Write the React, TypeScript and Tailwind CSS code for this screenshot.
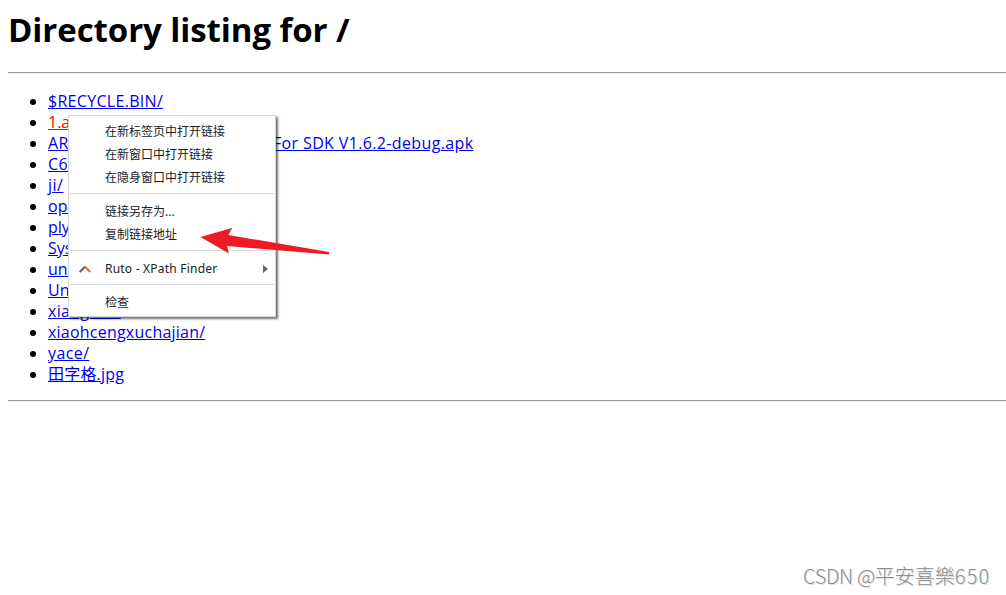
interface Entry {
  name: string;
  rest?: string;
  visited?: boolean;
  className?: string;
}

const entries: Entry[] = [
  { name: "$RECYCLE.BIN/", className: "tracking-[0.3px]" },
  { name: "1.apk", visited: true },
  { name: "AR", rest: "For SDK V1.6.2-debug.apk", className: "tracking-[0.36px]" },
  { name: "C6/", className: "tracking-[0.3px]" },
  { name: "ji/", className: "tracking-[0.5px]" },
  { name: "op/" },
  { name: "ply/" },
  { name: "Sys/" },
  { name: "un/" },
  { name: "Un/" },
  { name: "xiangmu/", className: "tracking-[0.3px]" },
  { name: "xiaohcengxuchajian/", className: "tracking-[0.22px]" },
  { name: "yace/", className: "tracking-[0.4px]" },
  { name: "田字格.jpg", className: "tracking-[0.2px]" },
];

const MenuItem = ({ label }: { label: string }) => (
  <div className="h-[23px] pl-9 leading-[23px] whitespace-nowrap">{label}</div>
);

const Separator = () => <div className="mx-px mt-1 mb-1.5 h-px bg-[#d9dadc]" />;

const ContextMenu = () => (
  <div className="absolute left-[68px] top-[115px] h-[202px] w-[208px] border border-[#d5d6d8] bg-white pt-1 text-xs text-[#202124] shadow-[2px_2px_2px_rgba(0,0,0,0.55)] font-['Noto_Sans','Noto_Sans_CJK_SC',sans-serif]">
    <MenuItem label="在新标签页中打开链接" />
    <MenuItem label="在新窗口中打开链接" />
    <MenuItem label="在隐身窗口中打开链接" />
    <Separator />
    <MenuItem label="链接另存为..." />
    <MenuItem label="复制链接地址" />
    <Separator />
    <div className="flex h-[23px] items-center pl-[10px] pr-[7px]">
      <svg className="h-2 w-3" viewBox="0 0 12 8" fill="none" strokeWidth="2">
        <path d="M0.7 7L6 1.7" stroke="#606060" />
        <path d="M5.5 1.2L11.3 7" stroke="#f06a30" />
      </svg>
      <span className="ml-[14px] flex-1 tracking-[0.22px] whitespace-nowrap">Ruto - XPath Finder</span>
      <svg className="h-2 w-[5px]" viewBox="0 0 5 8">
        <path d="M0 0L5 4L0 8Z" fill="#5f6368" />
      </svg>
    </div>
    <Separator />
    <MenuItem label="检查" />
  </div>
);

export default function App() {
  return (
    <div className="relative h-[595px] w-[1006px] overflow-hidden bg-white pl-2 text-base text-black font-['Open_Sans','Noto_Sans_CJK_SC',sans-serif]">
      <h1 className="h-[72px] pt-2 text-[33px] leading-[44px] font-bold tracking-[-0.08px]">Directory listing for /</h1>
      <hr className="h-[2px] border-0 border-t border-b border-t-[#9a9a9a] border-b-[#eeeeee]" />
      <ul className="mt-[17px] pl-10">
        {entries.map((entry) => (
          <li key={entry.name} className="relative flex h-[21px] leading-[21px] whitespace-nowrap">
            <span className="absolute left-[-18px] top-[8px] h-[6px] w-[6px] rounded-full bg-black" />
            <a className={`underline ${entry.visited ? "text-[#ff0000]" : "text-[#0000ee]"} ${entry.className ?? ""}`}>
              {entry.rest ? <span className="inline-block w-[225px] underline">{entry.name}</span> : entry.name}
              {entry.rest}
            </a>
          </li>
        ))}
      </ul>
      <hr className="mt-[15px] h-[2px] border-0 border-t border-b border-t-[#9a9a9a] border-b-[#eeeeee]" />
      <ContextMenu />
      <svg className="absolute left-[200px] top-[226px] h-[30px] w-[131px]" viewBox="0 0 131 30">
        <path d="M0.5 11L32 2L28.5 9L129 26V28.5L27 20L29 27.5Z" fill="#ed1c24" />
      </svg>
      <div className="absolute left-[803px] top-[562px] text-[20px] leading-7 font-light whitespace-nowrap text-[#8c8c8c] [text-shadow:1px_1px_0_#e4e4e4] font-['Noto_Sans_CJK_TC',sans-serif]">
        <span className="tracking-[-0.35px]">CSDN @</span>
        平安喜樂
        <span className="tracking-[1.2px]">650</span>
      </div>
    </div>
  );
}
